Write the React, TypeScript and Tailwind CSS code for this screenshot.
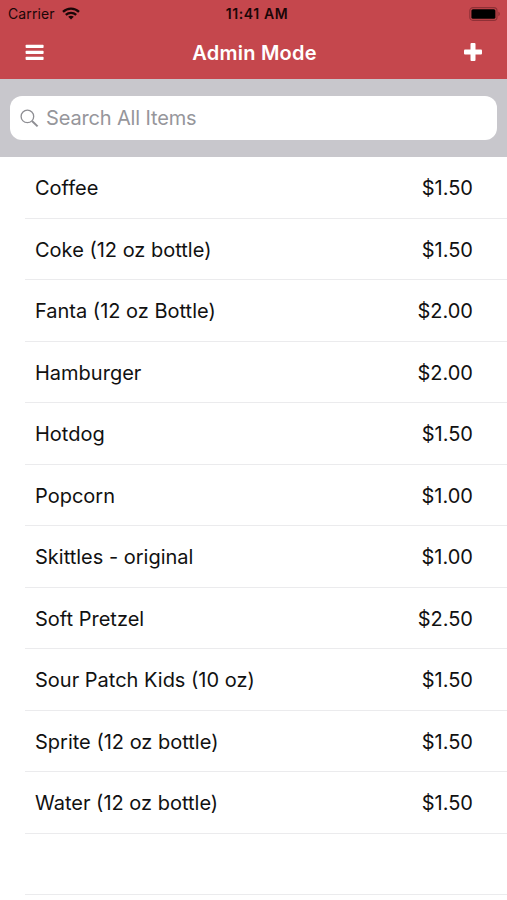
type Item = {
  name: string
  price: number
}

const ITEMS: Item[] = [
  { name: 'Coffee', price: 1.5 },
  { name: 'Coke (12 oz bottle)', price: 1.5 },
  { name: 'Fanta (12 oz Bottle)', price: 2 },
  { name: 'Hamburger', price: 2 },
  { name: 'Hotdog', price: 1.5 },
  { name: 'Popcorn', price: 1 },
  { name: 'Skittles - original', price: 1 },
  { name: 'Soft Pretzel', price: 2.5 },
  { name: 'Sour Patch Kids (10 oz)', price: 1.5 },
  { name: 'Sprite (12 oz bottle)', price: 1.5 },
  { name: 'Water (12 oz bottle)', price: 1.5 },
]

const fmt = (v: number) => `$${v.toFixed(2)}`

function WifiIcon() {
  return (
    <svg width="18" height="13" viewBox="0 0 18 13" fill="none" stroke="#1a0607" strokeWidth="2.3">
      <path d="M1 4.9C5.4 0.6 12.6 0.6 17 4.9" />
      <path d="M3.8 7.9C6.8 5.1 11.2 5.1 14.2 7.9" />
      <path d="M9 12.4L6.2 9.7C7.8 8.3 10.2 8.3 11.8 9.7Z" fill="#1a0607" stroke="none" />
    </svg>
  )
}

function BatteryIcon() {
  return (
    <svg width="32" height="14" viewBox="0 0 32 14">
      <rect x="0.8" y="0.6" width="27.2" height="12.8" rx="3.2" fill="none" stroke="#8f3036" strokeWidth="1.1" />
      <rect x="2.4" y="2.2" width="24" height="9.6" rx="1.6" fill="#000" />
      <path d="M29.4 4.8C31.3 5.4 31.3 8.6 29.4 9.2Z" fill="#8f3036" />
    </svg>
  )
}

function StatusBar() {
  return (
    <div className="grid h-[27px] grid-cols-3 items-center pr-[6px] pl-2 text-[14px] leading-[27px] text-[#1a0607]">
      <div className="flex items-center gap-[7px]">
        <span className="tracking-[0.1px]">Carrier</span>
        <WifiIcon />
      </div>
      <span className="pl-[5px] text-center text-[14px] font-semibold tracking-[0.6px]">11:41 AM</span>
      <div className="flex justify-end">
        <BatteryIcon />
      </div>
    </div>
  )
}

function NavBar() {
  return (
    <div className="grid h-[52px] grid-cols-[1fr_auto_1fr] items-center px-[25px]">
      <button aria-label="Menu" className="pb-[2px]">
        <svg width="19" height="17" viewBox="0 0 19 17" fill="#fff">
          <rect x="0.6" y="0.7" width="18" height="3.3" rx="0.8" />
          <rect x="0.6" y="6.7" width="18" height="3.3" rx="0.8" />
          <rect x="0.6" y="12.7" width="18" height="3.3" rx="0.8" />
        </svg>
      </button>
      <h1 className="pl-[2px] text-[20px] font-semibold tracking-[0.25px] text-white">Admin Mode</h1>
      <button aria-label="Add item" className="justify-self-end pb-[3px]">
        <svg width="18" height="18" viewBox="0 0 18 18" fill="#fff">
          <rect x="6.5" y="0" width="5" height="18" rx="1" />
          <rect x="0" y="6.5" width="18" height="5" rx="1" />
        </svg>
      </button>
    </div>
  )
}

function SearchBar() {
  return (
    <div className="h-[78px] bg-[#c8c7cc] px-[10px] pt-[17px]">
      <div className="flex h-[44px] items-center gap-[7px] rounded-[12px] bg-white pl-[10px] text-[#8e8e93]">
        <svg width="19" height="19" viewBox="0 0 19 19" fill="none" stroke="currentColor">
          <circle cx="7.4" cy="7.4" r="6.3" strokeWidth="1.3" />
          <path d="M12 12L17.6 17.4" strokeWidth="2" />
        </svg>
        <span className="text-[20px] tracking-[-0.15px] text-[#96969b]">Search All Items</span>
      </div>
    </div>
  )
}

export default function App() {
  return (
    <div className="h-[900px] w-[507px] overflow-hidden bg-white font-['Inter','Liberation_Sans',sans-serif]">
      <header className="bg-[#c5474d]">
        <StatusBar />
        <NavBar />
      </header>
      <SearchBar />
      <ul>
        {ITEMS.map(item => (
          <li
            key={item.name}
            className="ml-[25px] flex h-[61.5px] items-center justify-between border-b border-[#ebebed] pt-[2px] pr-[34px] pl-[10px] text-[20px] text-[#111]"
          >
            <span>{item.name}</span>
            <span>{fmt(item.price)}</span>
          </li>
        ))}
        {/* Empty row below the last item */}
        <li className="ml-[25px] h-[61.5px] border-b border-[#ebebed]" />
      </ul>
    </div>
  )
}
